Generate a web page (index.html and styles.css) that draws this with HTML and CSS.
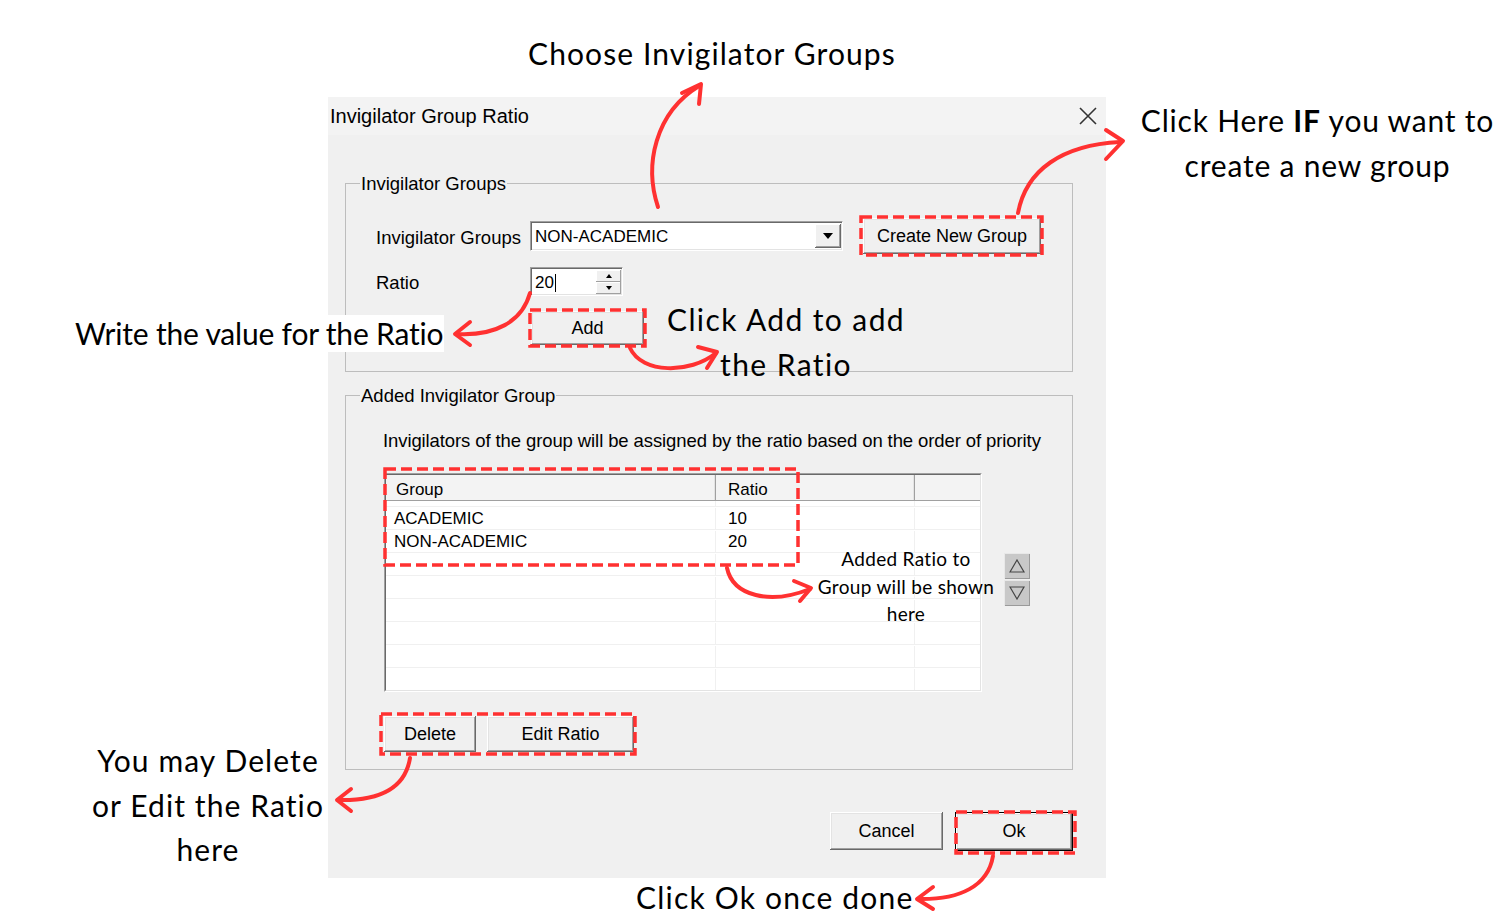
FILE: index.html
```html
<!DOCTYPE html>
<html lang="en">
<head>
  <meta charset="UTF-8">
  <title>Invigilator Group Ratio - Help</title>
  <link rel="stylesheet" href="styles.css">
</head>
<body>

  <div class="stage">

    <!-- the dialog itself -->
    <div class="dialog">
      <div class="titlebar">
        <span>Invigilator Group Ratio</span>
        <svg class="close" width="18" height="18" viewBox="0 0 18 18"><path d="M1 1 L17 17 M17 1 L1 17" stroke="#333" stroke-width="1.6" fill="none"/></svg>
      </div>

      <div class="dialog-body">
        <fieldset class="group group-top">
          <legend>Invigilator Groups</legend>
          <div class="group-inner">
            <div class="row">
              <span class="field-label">Invigilator Groups</span>
              <div class="combo">
                <span class="combo-text">NON-ACADEMIC</span>
                <span class="combo-btn"><svg width="10" height="6" viewBox="0 0 10 6"><path d="M0 0 H10 L5 6 Z" fill="#000"/></svg></span>
              </div>
              <button class="btn btn-create">Create New Group</button>
            </div>
            <div class="row row-ratio">
              <span class="field-label">Ratio</span>
              <div class="spin">
                <span class="spin-text">20<span class="caret"></span></span>
                <span class="spin-btns">
                  <span class="spin-btn"><svg width="6" height="4" viewBox="0 0 6 4"><path d="M0 4 H6 L3 0 Z" fill="#000"/></svg></span>
                  <span class="spin-btn"><svg width="6" height="4" viewBox="0 0 6 4"><path d="M0 0 H6 L3 4 Z" fill="#000"/></svg></span>
                </span>
              </div>
            </div>
            <button class="btn btn-add">Add</button>
          </div>
        </fieldset>

        <fieldset class="group group-added">
          <legend>Added Invigilator Group</legend>
          <div class="group-inner">
            <p class="hint">Invigilators of the group will be assigned by the ratio based on the order of priority</p>
            <div class="list-row">
              <div class="listview">
                <div class="listview-inner">
                  <div class="lv-head">
                    <span class="lv-col1">Group</span>
                    <span class="lv-col2">Ratio</span>
                    <span class="lv-col3"></span>
                  </div>
                  <div class="lv-gap"><span class="lv-col1"></span><span class="lv-col2"></span><span class="lv-col3"></span></div>
                  <div class="lv-row"><span class="lv-col1">ACADEMIC</span><span class="lv-col2">10</span><span class="lv-col3"></span></div>
                  <div class="lv-row"><span class="lv-col1">NON-ACADEMIC</span><span class="lv-col2">20</span><span class="lv-col3"></span></div>
                  <div class="lv-row"><span class="lv-col1"></span><span class="lv-col2"></span><span class="lv-col3"></span></div>
                  <div class="lv-row"><span class="lv-col1"></span><span class="lv-col2"></span><span class="lv-col3"></span></div>
                  <div class="lv-row"><span class="lv-col1"></span><span class="lv-col2"></span><span class="lv-col3"></span></div>
                  <div class="lv-row"><span class="lv-col1"></span><span class="lv-col2"></span><span class="lv-col3"></span></div>
                  <div class="lv-row"><span class="lv-col1"></span><span class="lv-col2"></span><span class="lv-col3"></span></div>
                  <div class="lv-row"><span class="lv-col1"></span><span class="lv-col2"></span><span class="lv-col3"></span></div>
                </div>
              </div>
              <div class="updown">
                <span class="ud-btn"><svg width="16" height="14" viewBox="0 0 16 14"><path d="M1 13 L8 1 L15 13 Z" fill="none" stroke="#444" stroke-width="1.2"/></svg></span>
                <span class="ud-btn"><svg width="16" height="14" viewBox="0 0 16 14"><path d="M1 1 L8 13 L15 1 Z" fill="none" stroke="#444" stroke-width="1.2"/></svg></span>
              </div>
            </div>
            <div class="list-actions">
              <button class="btn btn-delete">Delete</button>
              <button class="btn btn-edit">Edit Ratio</button>
            </div>
          </div>
        </fieldset>

        <div class="dialog-actions">
          <button class="btn btn-cancel">Cancel</button>
          <button class="btn btn-ok">Ok</button>
        </div>
      </div>
    </div>

    <!-- annotation marks: dashed highlight boxes and arrows -->
    <svg class="marks" width="1499" height="920" viewBox="0 0 1499 920">
      <g fill="none" stroke="#ff3131" stroke-width="3.5" stroke-dasharray="11 5">
        <rect x="861" y="217" width="181" height="38"/>
        <rect x="530" y="310" width="115" height="36"/>
        <rect x="385" y="469" width="413" height="96"/>
        <rect x="381" y="714" width="254" height="40"/>
        <rect x="956" y="812" width="119" height="41"/>
      </g>
      <g fill="none" stroke="#ff3131" stroke-width="4" stroke-linecap="round" stroke-linejoin="round">
        <path d="M658 207 C644 165 655 113 699 86"/>
        <path d="M682 93 L701 84 L699 104"/>
        <path d="M1018 213 C1026 170 1062 145 1120 142"/>
        <path d="M1106 130 L1123 141 L1106 159"/>
        <path d="M530 293 C522 322 495 336 457 334"/>
        <path d="M470 322 L455 334 L470 345"/>
        <path d="M630 348 C642 374 690 374 716 353"/>
        <path d="M698 347 L717 352 L707 368"/>
        <path d="M727 568 C733 596 770 605 810 589"/>
        <path d="M794 581 L811 588 L800 601"/>
        <path d="M410 758 C405 790 376 801 338 800"/>
        <path d="M351 789 L337 800 L351 811"/>
        <path d="M993 856 C988 886 960 900 918 899"/>
        <path d="M933 887 L917 899 L933 909"/>
      </g>
    </svg>

    <div class="note note-choose">Choose Invigilator Groups</div>
    <div class="note note-create">Click Here <b>IF</b> you want to<br>create a new group</div>
    <div class="note note-write">Write the value for the Ratio</div>
    <div class="note note-add">Click Add to add<br>the Ratio</div>
    <div class="note note-list">Added Ratio to<br>Group will be shown<br>here</div>
    <div class="note note-edit">You may Delete<br>or Edit the Ratio<br>here</div>
    <div class="note note-ok">Click Ok once done</div>

  </div>

</body>
</html>
```

FILE: styles.css
```css
body {
  margin: 0;
  background: #fff;
  font-family: "Liberation Sans", Arial, sans-serif;
  color: #000;
}

.stage {
  position: relative;
  width: 1499px;
  height: 920px;
  padding: 97px 0 0 328px;
  box-sizing: border-box;
  overflow: hidden;
}

/* dialog */
.dialog {
  width: 778px;
  height: 781px;
  background: #f0f0f0;
}

.titlebar {
  height: 38px;
  background: #f3f3f3;
  display: flex;
  align-items: center;
  justify-content: space-between;
  padding: 0 9px 0 2px;
  font-size: 20px;
}

.dialog-body {
  padding: 0 33px 0 17px;
}

.group {
  margin: 0;
  padding: 0;
  border: 1px solid #bdbdbd;
}

.group legend {
  margin-left: 14px;
  padding: 2px 1px 0;
  font-size: 18.5px;
  line-height: 20px;
}

.group-top {
  margin-top: 37px;
}

.group-top .group-inner {
  padding: 24px 0 26px 30px;
}

.row {
  display: flex;
  align-items: center;
}

.row-ratio {
  margin-top: 13px;
}

.field-label {
  width: 154px;
  padding-top: 3px;
  font-size: 18.5px;
}

/* sunken input boxes */
.combo, .spin {
  display: flex;
  box-sizing: border-box;
  background: #fff;
  border: 1px solid;
  border-color: #a0a0a0 #fff #fff #a0a0a0;
  box-shadow: inset 1px 1px #696969, inset -1px -1px #e3e3e3;
  font-size: 17px;
}

.combo {
  width: 313px;
  height: 30px;
}

.combo-text, .spin-text {
  flex: 1;
  display: flex;
  align-items: center;
  padding: 2px 0 0 4px;
}

.combo-btn {
  width: 26px;
  margin: 2px 1px 2px 0;
  display: flex;
  align-items: center;
  justify-content: center;
  background: #f0f0f0;
  box-shadow: inset -1px -1px #696969, inset 1px 1px #fff, inset -2px -2px #a0a0a0;
}

.spin {
  width: 93px;
  height: 29px;
}

.caret {
  display: inline-block;
  width: 1px;
  height: 18px;
  margin-left: 1px;
  background: #000;
}

.spin-btns {
  width: 25px;
  margin: 2px 1px 1px 0;
  display: flex;
  flex-direction: column;
}

.spin-btn {
  flex: 1;
  display: flex;
  align-items: center;
  justify-content: center;
  background: #f0f0f0;
  box-shadow: inset -1px -1px #a0a0a0, inset 1px 1px #fff;
}

/* push buttons */
.btn {
  font-family: "Liberation Sans", Arial, sans-serif;
  font-size: 18px;
  color: #000;
  background: #f0f0f0;
  border: none;
  padding: 0;
  box-sizing: border-box;
  box-shadow: inset -1px -1px #696969, inset 1px 1px #fff, inset -2px -2px #a0a0a0, inset 2px 2px #e3e3e3;
}

.btn-create {
  margin-left: 20px;
  width: 178px;
  height: 36px;
}

.btn-add {
  margin: 15px 0 0 155px;
  width: 113px;
  height: 34px;
}

.group-added {
  margin-top: 12px;
}

.group-added .group-inner {
  padding: 24px 0 17px 38px;
}

.hint {
  margin: 0 0 0 -1px;
  font-size: 18.5px;
  line-height: 22px;
  letter-spacing: -0.1px;
}

.list-row {
  display: flex;
  align-items: center;
  margin-top: 21px;
}

/* list view */
.listview {
  width: 598px;
  height: 219px;
  box-sizing: border-box;
  border: 1px solid;
  border-color: #a0a0a0 #fff #fff #a0a0a0;
}

.listview-inner {
  height: 100%;
  box-sizing: border-box;
  border: 1px solid;
  border-color: #696969 #e3e3e3 #e3e3e3 #696969;
  background: #fff;
  font-size: 17px;
}

.lv-head, .lv-row, .lv-gap {
  display: flex;
}

.lv-col1 { width: 330px; padding-left: 8px; }
.lv-col2 { width: 199px; padding-left: 12px; }
.lv-col3 { flex: 1; }

.lv-head span, .lv-row span, .lv-gap span {
  box-sizing: border-box;
}

.lv-head {
  height: 26px;
  background: #f3f3f3;
  border-bottom: 1px solid #a0a0a0;
  box-sizing: border-box;
  align-items: center;
}

.lv-head span {
  height: 100%;
  display: flex;
  align-items: center;
  padding-top: 4px;
  border-right: 1px solid #a0a0a0;
  box-shadow: inset -1px 0 #e3e3e3;
}

.lv-head .lv-col1 { padding-left: 10px; }
.lv-head .lv-col3 { border-right: none; box-shadow: none; }

.lv-gap {
  height: 5px;
}

.lv-row {
  height: 23px;
  box-sizing: border-box;
  border-top: 1px solid #f0f0f0;
  line-height: 22px;
  padding-top: 1px;
}

.lv-row .lv-col1, .lv-row .lv-col2,
.lv-gap .lv-col1, .lv-gap .lv-col2 {
  border-right: 1px solid #f0f0f0;
}

.updown {
  margin: 0 0 6px 22px;
  display: flex;
  flex-direction: column;
  gap: 1px;
}

.ud-btn {
  width: 26px;
  height: 26px;
  display: flex;
  align-items: center;
  justify-content: center;
  background: #c8c8c8;
  box-shadow: inset 1px 1px #e8e8e8, inset -1px -1px #9a9a9a;
}

.list-actions {
  display: flex;
  gap: 11px;
  margin-top: 24px;
}

.btn-delete {
  width: 92px;
  height: 36px;
}

.btn-edit {
  width: 147px;
  height: 36px;
}

.dialog-actions {
  display: flex;
  justify-content: flex-end;
  gap: 12px;
  margin-top: 42px;
}

.btn-cancel {
  width: 113px;
  height: 38px;
}

.btn-ok {
  width: 118px;
  height: 39px;
  border: 1px solid #000;
}

/* annotations */
.marks {
  position: absolute;
  left: 0;
  top: 0;
  pointer-events: none;
}

.note {
  position: absolute;
  font-family: Lato, "Open Sans", sans-serif;
  font-weight: 400;
  font-size: 30px;
  line-height: 45px;
  letter-spacing: 1.1px;
  color: #000;
  white-space: nowrap;
}

.note b {
  font-weight: 700;
}

.note-choose {
  left: 528px;
  top: 31px;
}

.note-create {
  left: 1130px;
  top: 98px;
  width: 375px;
  text-align: center;
  letter-spacing: 0.8px;
}

.note-write {
  left: 70px;
  top: 315px;
  height: 37px;
  line-height: 37px;
  padding: 0 1px 0 5px;
  background: #fff;
  letter-spacing: -0.2px;
}

.note-add {
  left: 660px;
  top: 297px;
  width: 252px;
  text-align: center;
  letter-spacing: 1.4px;
}

.note-list {
  left: 800px;
  top: 545px;
  width: 212px;
  font-size: 19px;
  line-height: 27.5px;
  letter-spacing: 0.3px;
  text-align: center;
}

.note-edit {
  left: 80px;
  top: 738px;
  width: 256px;
  line-height: 44.5px;
  text-align: center;
}

.note-ok {
  left: 636px;
  top: 875px;
  letter-spacing: 1.2px;
}
```
